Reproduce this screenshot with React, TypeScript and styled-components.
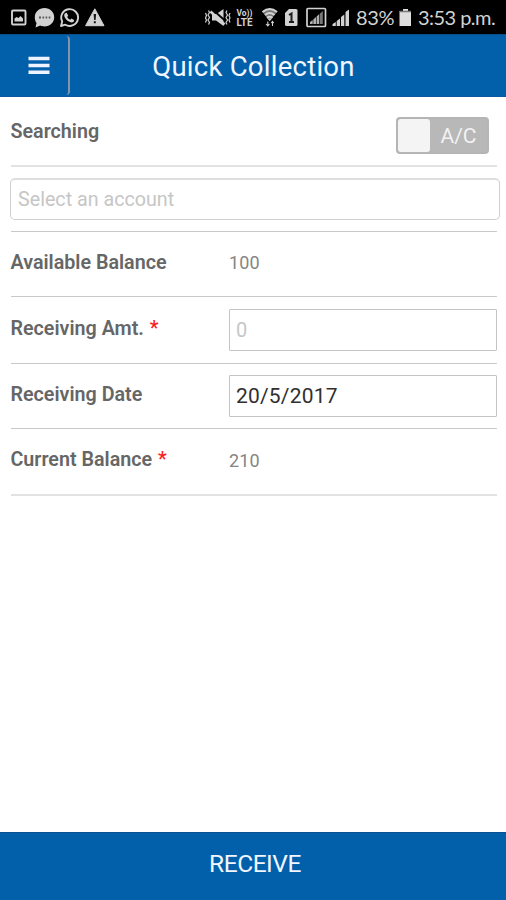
import React from "react";
import styled, { createGlobalStyle, css } from "styled-components";

const GlobalStyle = createGlobalStyle`
  * { box-sizing: border-box; }
  body { margin: 0; background: #fff; font-family: Roboto, "Liberation Sans", sans-serif; }
`;

const Screen = styled.div`
  width: 506px;
  height: 900px;
  display: flex;
  flex-direction: column;
  overflow: hidden;
  background: #fff;
`;

const StatusBar = styled.div`
  height: 34px;
  flex: none;
  display: flex;
  align-items: center;
  justify-content: space-between;
  padding: 2px 10px 0 10px;
  background: #000;
  color: #d2d2d2;
`;

const StatusGroup = styled.div`
  display: flex;
  align-items: center;
`;

const StatusIcon = styled.svg<{ $w: number; $gap?: number }>`
  display: block;
  flex: none;
  width: ${(p) => p.$w}px;
  height: 22px;
  margin-right: ${(p) => p.$gap ?? 0}px;
`;

const StatusText = styled.span<{ $width: number; $spacing: number }>`
  width: ${(p) => p.$width}px;
  margin-bottom: 2px;
  font: 400 20px/22px Lato, "Open Sans", sans-serif;
  letter-spacing: ${(p) => p.$spacing}px;
  white-space: nowrap;
`;

const Header = styled.header`
  height: 63px;
  flex: none;
  display: grid;
  grid-template-columns: 70px 1fr 70px;
  background: #0260ab;
  border-top: 1px solid #0a4d88;
  border-bottom: 1px solid #0a57a3;
`;

const MenuButton = styled.button`
  height: 59px;
  margin: 1px 0;
  padding: 0 0 0 28px;
  display: flex;
  align-items: center;
  background: none;
  border: 0;
  border-right: 2px solid #8593ad;
  border-radius: 0 4px 4px 0;
`;

const Title = styled.h1`
  margin: 0;
  padding-left: 1px;
  font-size: 27.5px;
  font-weight: 400;
  line-height: 63px;
  letter-spacing: 0.25px;
  text-align: center;
  color: #f1f6ff;
`;

const Form = styled.main`
  flex: 1;
  padding: 0 9px 0 11px;
`;

const Row = styled.div<{ $height: number; $soft?: boolean }>`
  height: ${(p) => p.$height}px;
  display: grid;
  grid-template-columns: 218px 1fr;
  align-items: center;
  border-bottom: ${(p) => (p.$soft ? "2px solid #e2e2e2" : "1px solid #c9c9c9")};
`;

const SearchRow = styled(Row)`
  padding-top: 4px;
`;

const Label = styled.label`
  font-size: 19.7px;
  font-weight: 600;
  line-height: 24px;
  color: #666;
  white-space: nowrap;
  margin: 0 0 3px -0.5px;
`;

const Required = styled.span`
  margin-left: 1px;
  font-weight: 500;
  color: #fa1d1d;
`;

const Value = styled.span`
  margin-bottom: 2px;
  font-size: 18px;
  line-height: 24px;
  letter-spacing: 0.15px;
  color: #858585;
`;

const fieldBox = css`
  height: 42px;
  background: #fff;
  font-family: inherit;
  outline: 0;
  &::placeholder { color: #c6c6c6; opacity: 1; }
`;

const Field = styled.input`
  ${fieldBox}
  width: 268px;
  padding: 0 6px;
  border: 1px solid #c4c4c4;
  border-radius: 1px;
  font-size: 21px;
  letter-spacing: 0.2px;
  color: #303030;
  &::placeholder { font-size: 20px; }
`;

const SelectRow = styled(Row)`
  grid-template-columns: 1fr;
`;

const AccountField = styled.input`
  ${fieldBox}
  width: 490px;
  margin-left: -1px;
  padding: 0 7px;
  border: 1px solid #d0d0d0;
  border-top: 2px solid #dedede;
  border-radius: 5px;
  font-size: 19.7px;
`;

const Toggle = styled.button`
  justify-self: end;
  width: 93px;
  height: 37px;
  margin: 4px 8px 0 0;
  padding: 0;
  display: flex;
  border: 2px solid #b5b5b5;
  border-radius: 4px;
  background: #b8b8b8;
  color: #f2f2f2;
  font: 400 21px/34px Roboto, sans-serif;
`;

const Knob = styled.span`
  width: 32px;
  height: 33px;
  border-radius: 3px;
  background: #f4f4f4;
`;

const ToggleText = styled.span`
  flex: 1;
  text-align: center;
`;

const ReceiveButton = styled.button`
  height: 68px;
  flex: none;
  padding: 0 0 5px 4px;
  border: 0;
  border-top: 1px solid #0a4f94;
  background: #0260ab;
  color: #f1f6ff;
  font: 400 24.5px/30px Roboto, sans-serif;
  letter-spacing: -0.45px;
`;

const C = "#d2d2d2";

function LeftIcons() {
  return (
    <StatusGroup>
      <StatusIcon $w={17} $gap={7} viewBox="0 0 17 22">
        <rect x="2" y="3.500" width="13.500" height="14" rx="1" fill="none" stroke={C} strokeWidth="1.900" />
        <path d="M4.500 14.500v-3l2-1.500 2 1 2-2 2.500 2.500v3z" fill={C} />
      </StatusIcon>
      <StatusIcon $w={21} $gap={4} viewBox="0 0 21 22">
        <path d="M10.500 1C16 1 20.200 5 20.200 10.200S16 19.500 10.500 19.500c-1.700 0-3-.2-4.300-.9L1.500 20.500l1-4.600C1.300 14.300.8 12.500.8 10.200.8 5 5 1 10.500 1z" fill={C} />
        <path d="M5 10.500h2m1.500 0h1.600m1.500 0h1.600m1.500 0h1.600" stroke="#555" strokeWidth="2" />
      </StatusIcon>
      <StatusIcon $w={20} $gap={6} viewBox="0 0 20 22">
        <path d="M2 19l1.200-4.600A8.400 8.400 0 1 1 6.300 17.700z" fill="none" stroke={C} strokeWidth="1.900" strokeLinejoin="round" />
        <path d="M6.200 6.200l1.500-.5 1.500 3-1 1.200c.8 1.500 1.600 2.200 3 2.800l1.200-1.200 2.700 1.400c0 1.800-1.200 2.500-2.600 2.500C9 15.400 5 11 5.200 8.100c0-.8.400-1.500 1-1.900z" fill={C} />
      </StatusIcon>
      <StatusIcon $w={20} viewBox="0 0 20 22">
        <path d="M9.800 1.800L19 18.700H.6z" fill={C} stroke={C} strokeLinejoin="round" />
        <path d="M8.600 7h2.500l-.5 6H9.100zM8.800 14.300h2v2h-2z" fill="#161616" />
      </StatusIcon>
    </StatusGroup>
  );
}

function RightIcons() {
  return (
    <StatusGroup>
      <StatusIcon $w={27} $gap={4} viewBox="0 0 27 22">
        <path d="M8 7h4.500L19.500 2v17L12 13.500H8z" fill={C} />
        <path d="M8.500 2.500L22 14.500" stroke="#000" strokeWidth="1.800" />
        <path d="M6.500 4.500L20.500 17.500" stroke={C} strokeWidth="2.600" />
        <path d="M4.500 3.500l1 2-1.500 2.500 1.500 2.500L4 13l1.500 2.500-1 2M1.500 6l1 2.500-1 2.500 1 2-1 2.500M23 3.500l-1 2L23.500 8l-1.500 2.500 1.500 2.500-1.500 2.500 1 2M26 6l-1 2.500 1 2.500-1 2 1 2.500" fill="none" stroke={C} strokeWidth="1.200" />
      </StatusIcon>
      <StatusIcon $w={18} $gap={8} viewBox="0 0 18 22">
        <text x="1.500" y="8.500" fontFamily="Roboto" fontWeight="700" fontSize="9" textLength="16" lengthAdjust="spacingAndGlyphs" fill={C}>Vo))</text>
        <text x="1.500" y="19" fontFamily="Roboto" fontWeight="700" fontSize="11" textLength="16" lengthAdjust="spacingAndGlyphs" fill={C}>LTE</text>
      </StatusIcon>
      <StatusIcon $w={17} $gap={6} viewBox="0 0 17 22">
        <path d="M1 4.500q7.700-5.500 15.400 0L8.700 14z" fill="#777" />
        <path d="M1.500 5q7.300-6 14.500 0M4 8q4.700-4 9.500 0M6 10.800q2.700-2 5.500 0" fill="none" stroke={C} strokeWidth="2.100" />
        <path d="M6.500 11.500h4.500L8.700 14z" fill={C} />
        <path d="M6.800 14.500v4.500M5 17l1.800 2 1.700-2M11.500 19v-4.500M10.300 16l1.200-1.500 1.200 1.500" fill="none" stroke={C} strokeWidth="1.100" />
      </StatusIcon>
      <StatusIcon $w={15} $gap={7} viewBox="0 0 15 22">
        <path d="M5 2h7a1.500 1.500 0 0 1 1.500 1.500v14A1.500 1.500 0 0 1 12 19H2.500A1.500 1.500 0 0 1 1 17.500V6z" fill={C} />
        <path d="M5 8l2.500-1.500v8M5 15h5" fill="none" stroke="#1c1c1c" strokeWidth="2" />
      </StatusIcon>
      <StatusIcon $w={21} $gap={5} viewBox="0 0 21 22">
        <rect x="1" y="1.500" width="18.500" height="18" rx="1" fill="none" stroke={C} strokeWidth="1.700" />
        <path d="M4 17v-2l2.700-2v4zM7.300 17v-4.500l2.700-2.500v7zM10.600 17V9.500l2.700-2.500v10z" fill="#b0b0b0" />
        <path d="M14 17V6.500L16.800 4v13z" fill="#777" />
      </StatusIcon>
      <StatusIcon $w={19} $gap={5} viewBox="0 0 19 22">
        <path d="M.5 19v-2l3.300-2v4zM4.700 19v-5L8 11.500V19zM9 19v-9l3.300-2.500V19zM13.500 19V5L17 2.500V19z" fill={C} />
      </StatusIcon>
      <StatusText $width={43} $spacing={-0.4}>83%</StatusText>
      <StatusIcon $w={13} $gap={6} viewBox="0 0 13 22">
        <path d="M4 2h5v2h3V19H.5V4H4z" fill="#dedede" />
        <path d="M.5 4.500h11.500" stroke="#777" strokeWidth="1.500" />
      </StatusIcon>
      <StatusText $width={78} $spacing={-0.55}>3:53 p.m.</StatusText>
    </StatusGroup>
  );
}

export default function App() {
  return (
    <>
      <GlobalStyle />
      <Screen>
        <StatusBar>
          <LeftIcons />
          <RightIcons />
        </StatusBar>
        <Header>
          <MenuButton aria-label="Menu">
            <svg width="22" height="19" viewBox="0 0 22 19">
              <path d="M0.500 2.500h21M0.500 9.500h21M0.500 16.300h21" stroke="#eef4ff" strokeWidth="3.600" />
            </svg>
          </MenuButton>
          <Title>Quick Collection</Title>
        </Header>
        <Form>
          <SearchRow $height={70} $soft>
            <Label>Searching</Label>
            <Toggle>
              <Knob />
              <ToggleText>A/C</ToggleText>
            </Toggle>
          </SearchRow>
          <SelectRow $height={65}>
            <AccountField placeholder="Select an account" />
          </SelectRow>
          <Row $height={65}>
            <Label>Available Balance</Label>
            <Value>100</Value>
          </Row>
          <Row $height={67}>
            <Label>Receiving Amt. <Required>*</Required></Label>
            <Field placeholder="0" />
          </Row>
          <Row $height={65}>
            <Label>Receiving Date</Label>
            <Field defaultValue="20/5/2017" />
          </Row>
          <Row $height={67} $soft>
            <Label>Current Balance <Required>*</Required></Label>
            <Value>210</Value>
          </Row>
        </Form>
        <ReceiveButton>RECEIVE</ReceiveButton>
      </Screen>
    </>
  );
}
